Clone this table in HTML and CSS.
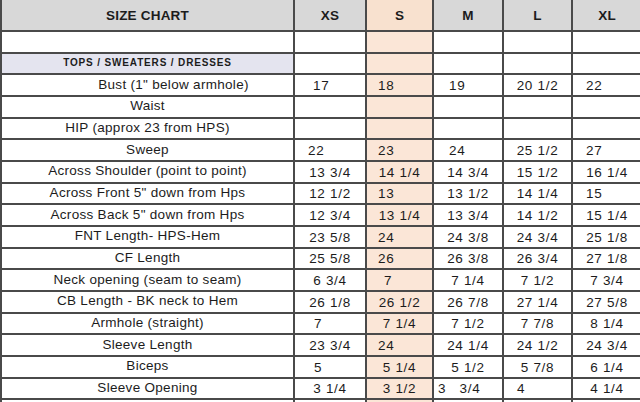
FILE: index.html
```html
<!DOCTYPE html>
<html>
<head>
<meta charset="utf-8">
<link rel="stylesheet" href="styles.css">
</head>
<body>
<table class="chart">
  <colgroup>
    <col class="c-label"><col class="c-xs"><col class="c-s"><col class="c-m"><col class="c-l"><col class="c-xl">
  </colgroup>
  <tr class="head">
    <th class="title">SIZE CHART</th><th>XS</th><th class="s">S</th><th>M</th><th>L</th><th>XL</th>
  </tr>
  <tr><td class="label"></td><td></td><td class="s"></td><td></td><td></td><td></td></tr>
  <tr><td class="label section">TOPS / SWEATERS / DRESSES</td><td></td><td class="s"></td><td></td><td></td><td></td></tr>
  <tr><td class="label bust">Bust (1" below armhole)</td><td class="p19">17</td><td class="s p12">18</td><td class="p16">19</td><td>20 1/2</td><td class="p14">22</td></tr>
  <tr><td class="label">Waist</td><td></td><td class="s"></td><td></td><td></td><td></td></tr>
  <tr><td class="label">HIP (approx 23 from HPS)</td><td></td><td class="s"></td><td></td><td></td><td></td></tr>
  <tr><td class="label">Sweep</td><td class="p14">22</td><td class="s p12">23</td><td class="p16">24</td><td>25 1/2</td><td class="p14">27</td></tr>
  <tr><td class="label">Across Shoulder (point to point)</td><td>13 3/4</td><td class="s">14 1/4</td><td>14 3/4</td><td>15 1/2</td><td>16 1/4</td></tr>
  <tr><td class="label">Across Front 5" down from Hps</td><td>12 1/2</td><td class="s p12">13</td><td>13 1/2</td><td>14 1/4</td><td class="p14">15</td></tr>
  <tr><td class="label">Across Back 5" down from Hps</td><td>12 3/4</td><td class="s">13 1/4</td><td>13 3/4</td><td>14 1/2</td><td>15 1/4</td></tr>
  <tr><td class="label">FNT Length- HPS-Hem</td><td>23 5/8</td><td class="s p12">24</td><td>24 3/8</td><td>24 3/4</td><td>25 1/8</td></tr>
  <tr><td class="label">CF Length</td><td>25 5/8</td><td class="s p12">26</td><td>26 3/8</td><td>26 3/4</td><td>27 1/8</td></tr>
  <tr><td class="label">Neck opening (seam to seam)</td><td>6 3/4</td><td class="s p18">7</td><td>7 1/4</td><td>7 1/2</td><td>7 3/4</td></tr>
  <tr><td class="label">CB Length - BK neck to Hem</td><td>26 1/8</td><td class="s">26 1/2</td><td>26 7/8</td><td>27 1/4</td><td>27 5/8</td></tr>
  <tr><td class="label">Armhole (straight)</td><td class="p20">7</td><td class="s">7 1/4</td><td>7 1/2</td><td>7 7/8</td><td>8 1/4</td></tr>
  <tr><td class="label">Sleeve Length</td><td>23 3/4</td><td class="s p12">24</td><td>24 1/4</td><td>24 1/2</td><td>24 3/4</td></tr>
  <tr><td class="label">Biceps</td><td class="p20">5</td><td class="s">5 1/4</td><td>5 1/2</td><td>5 7/8</td><td>6 1/4</td></tr>
  <tr><td class="label">Sleeve Opening</td><td>3 1/4</td><td class="s">3 1/2</td><td class="p4">3&nbsp;&nbsp;&nbsp;3/4</td><td class="p13">4</td><td>4 1/4</td></tr>
  <tr><td class="label"></td><td></td><td class="s"></td><td></td><td></td><td></td></tr>
</table>
</body>
</html>
```
FILE: styles.css
```css
html, body {
  margin: 0;
  padding: 0;
  background: #ffffff;
  overflow: hidden;
}
body {
  font-family: "Liberation Sans", Arial, sans-serif;
  color: #1c1c1c;
}
.chart {
  border-collapse: collapse;
  table-layout: fixed;
  width: 641px;
  margin-left: 0;
}
.c-label { width: 293px; }
.c-xs { width: 72px; }
.c-s { width: 67px; }
.c-m { width: 70px; }
.c-l { width: 69px; }
.c-xl { width: 70px; }

.chart th, .chart td {
  border: 2px solid #4a4a4a;
  padding: 0;
  text-align: center;
  font-size: 13.5px;
  letter-spacing: 0.7px;
  white-space: nowrap;
  overflow: hidden;
}
.chart tr { height: 21.67px; }
.chart tr.head { height: 31px; }
.chart tr.head th {
  border-top: none;
  background: #d8d8d8;
  font-weight: bold;
  font-size: 13.5px;
  letter-spacing: 0.2px;
}
.chart tr.head th.s { background: #f8e1cf; }
.chart td.s { background: #fbe6d7; }
.chart td {
  vertical-align: bottom;
  padding-bottom: 2px;
}
.chart td.label {
  vertical-align: middle;
  padding-bottom: 2px;
  letter-spacing: 0.3px;
}
.chart td.section {
  background: #e4e4ef;
  font-weight: bold;
  font-size: 10px;
  letter-spacing: 0.85px;
}
.chart td.bust { padding-left: 52px; }
.chart td.p4 { text-align: left; padding-left: 4px; }
.chart td.p12 { text-align: left; padding-left: 11px; }
.chart td.p13 { text-align: left; padding-left: 13px; }
.chart td.p14 { text-align: left; padding-left: 13px; }
.chart td.p16 { text-align: left; padding-left: 15px; }
.chart td.p18 { text-align: left; padding-left: 17px; }
.chart td.p19 { text-align: left; padding-left: 18px; }
.chart td.p20 { text-align: left; padding-left: 19px; }
```
